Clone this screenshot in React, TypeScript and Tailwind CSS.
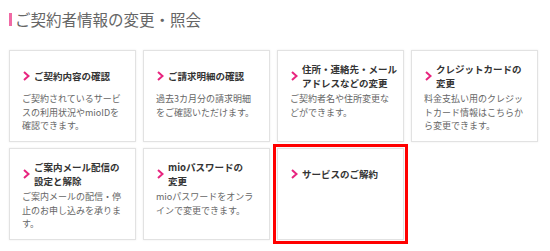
import React from 'react';

interface MenuItem {
  title: React.ReactNode;
  description?: string;
  highlighted?: boolean;
}

const items: MenuItem[] = [
  {
    title: 'ご契約内容の確認',
    description: 'ご契約されているサービスの利用状況やmioIDを確認できます。',
  },
  {
    title: 'ご請求明細の確認',
    description: '過去3カ月分の請求明細をご確認いただけます。',
  },
  {
    title: (
      <>
        住所・連絡先・メール
        <br />
        アドレスなどの変更
      </>
    ),
    description: 'ご契約者名や住所変更などができます。',
  },
  {
    title: (
      <>
        クレジットカードの
        <br />
        変更
      </>
    ),
    description: '料金支払い用のクレジットカード情報はこちらから変更できます。',
  },
  {
    title: (
      <>
        ご案内メール配信の
        <br />
        設定と解除
      </>
    ),
    description: 'ご案内メールの配信・停止のお申し込みを承ります。',
  },
  {
    title: (
      <>
        mioパスワードの
        <br />
        変更
      </>
    ),
    description: 'mioパスワードをオンラインで変更できます。',
  },
  {
    title: 'サービスのご解約',
    highlighted: true,
  },
];

// Pink chevron before each card title
function Chevron() {
  return (
    <svg width="7" height="10" viewBox="0 0 7 10" className="shrink-0 ml-[1px]">
      <polyline points="1,1 5.5,5 1,9" fill="none" stroke="#e8257f" strokeWidth="2" />
    </svg>
  );
}

function MenuCard({item}: {item: MenuItem}) {
  return (
    <a
      href="#"
      className={`block h-[92px] bg-white border border-[#e2e2e2] shadow-[0_0_2px_rgba(0,0,0,0.08)] px-[12px] pt-[10px] ${
        item.highlighted ? 'outline-3 outline-solid outline-[#ff0000] outline-offset-1' : ''
      }`}
    >
      {/* Title */}
      <div className="flex items-center gap-[4px] h-[29px]">
        <Chevron />
        <span className="whitespace-nowrap text-[9.5px] leading-[14px] font-bold text-[#333]">
          {item.title}
        </span>
      </div>

      {/* Description */}
      {item.description && (
        <p className="mt-[2px] text-[9px] leading-[13.5px] text-[#666]">{item.description}</p>
      )}
    </a>
  );
}

export default function App() {
  return (
    <div className="w-[550px] h-[251px] bg-white pl-[9px] pt-[9px] font-['Noto_Sans_CJK_JP',sans-serif]">
      {/* Section heading */}
      <h2 className="flex items-center gap-[3px] h-[20px]">
        <span className="w-[3px] h-[13px] bg-[#f06aa5]" />
        <span className="text-[15.5px] leading-[20px] font-normal text-[#666]">
          ご契約者情報の変更・照会
        </span>
      </h2>

      {/* Cards */}
      <div className="mt-[21px] grid grid-cols-[repeat(4,127px)] gap-x-[7px] gap-y-[6px]">
        {items.map((item, i) => (
          <MenuCard key={i} item={item} />
        ))}
      </div>
    </div>
  );
}
